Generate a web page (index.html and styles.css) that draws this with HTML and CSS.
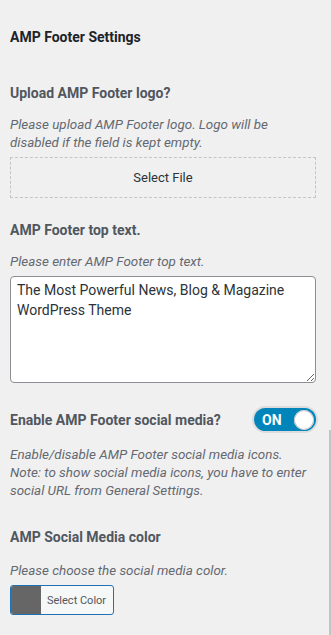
FILE: index.html
```html
<!DOCTYPE html>
<html lang="en">
<head>
    <meta charset="UTF-8">
    <meta name="viewport" content="width=device-width, initial-scale=1.0">
    <title>AMP Footer Settings</title>
    <link rel="stylesheet" href="styles.css">
</head>
<body>
    <div class="panel">
        <h2 class="section-title">AMP Footer Settings</h2>

        <!-- Footer logo -->
        <div class="control">
            <label class="control-title">Upload AMP Footer logo?</label>
            <p class="control-desc">Please upload AMP Footer logo. Logo will be disabled if the field is kept empty.</p>
            <button class="upload-btn" type="button">Select File</button>
        </div>

        <!-- Footer top text -->
        <div class="control">
            <label class="control-title">AMP Footer top text.</label>
            <p class="control-desc">Please enter AMP Footer top text.</p>
            <textarea class="text-field" rows="5">The Most Powerful News, Blog &amp; Magazine WordPress Theme</textarea>
        </div>

        <!-- Social media toggle -->
        <div class="control control-toggle">
            <div class="toggle-row">
                <label class="control-title">Enable AMP Footer social media?</label>
                <span class="switch">
                    <span class="switch-label">ON</span>
                    <span class="switch-knob"></span>
                </span>
            </div>
            <p class="control-desc">Enable/disable AMP Footer social media icons. Note: to show social media icons, you have to enter social URL from General Settings.</p>
        </div>

        <!-- Social color -->
        <div class="control control-color">
            <label class="control-title">AMP Social Media color</label>
            <p class="control-desc">Please choose the social media color.</p>
            <button class="color-btn" type="button">
                <span class="color-swatch"></span>
                <span class="color-text">Select Color</span>
            </button>
        </div>
    </div>
</body>
</html>
```

FILE: styles.css
```css
* {
    margin: 0;
    padding: 0;
    box-sizing: border-box;
    font-family: Roboto, 'Liberation Sans', sans-serif;
}

body {
    background: #f0f0f1;
    height: 635px;
    overflow: hidden;
}

.panel {
    padding: 28px 15px 0 10px;
    height: 100%;
}

.section-title {
    font-size: 14px;
    font-weight: 700;
    color: #1d2327;
    line-height: 18px;
    margin-bottom: 37px;
}

.control {
    margin-bottom: 22px;
}

.control-title {
    display: block;
    font-size: 14px;
    font-weight: 700;
    color: #50575e;
    line-height: 20px;
    margin-bottom: 13px;
}

.control-desc {
    font-size: 13.4px;
    font-style: italic;
    color: #646970;
    line-height: 18px;
    margin-bottom: 5px;
}

.upload-btn {
    display: block;
    width: 100%;
    height: 41px;
    margin-top: 1px;
    background: transparent;
    border: 1px dashed #c3c4c7;
    color: #2c3338;
    font-size: 13px;
    cursor: pointer;
}

.text-field {
    display: block;
    width: 100%;
    height: 107px;
    padding: 3px 6px;
    border: 1px solid #8c8f94;
    border-radius: 4px;
    background: #fff;
    color: #2c3338;
    font-size: 14px;
    line-height: 20px;
    resize: vertical;
}

.control-toggle {
    margin-top: 25px;
    margin-bottom: 27px;
    position: relative;
}

.control-toggle::after {
    content: "";
    position: absolute;
    right: -15px;
    top: 22px;
    height: 240px;
    border-right: 2px solid #c3c4c7;
}

.toggle-row {
    display: flex;
    justify-content: space-between;
    align-items: center;
    margin-bottom: 15px;
}

.toggle-row .control-title {
    margin-bottom: 0;
}

.control-color .control-title {
    margin-bottom: 15px;
}

.switch {
    display: flex;
    align-items: center;
    justify-content: space-between;
    width: 62px;
    height: 23px;
    padding: 0 2px 0 8px;
    background: #0085ba;
    border-radius: 12px;
    box-shadow: 0 0 0 2px #dcdcde;
}

.switch-label {
    color: #fff;
    font-size: 14px;
    font-weight: 700;
}

.switch-knob {
    width: 20px;
    height: 20px;
    border-radius: 50%;
    background: #fff;
    box-shadow: inset 0 0 0 1px #c3c4c7;
}

.color-btn {
    display: flex;
    align-items: stretch;
    height: 30px;
    border: 1px solid #2271b1;
    border-radius: 3px;
    background: #f6f7f7;
    overflow: hidden;
    cursor: pointer;
}

.color-swatch {
    width: 30px;
    background: #666;
}

.color-text {
    display: flex;
    align-items: center;
    padding: 0 7px 0 6px;
    font-size: 11px;
    color: #50575e;
}
```
